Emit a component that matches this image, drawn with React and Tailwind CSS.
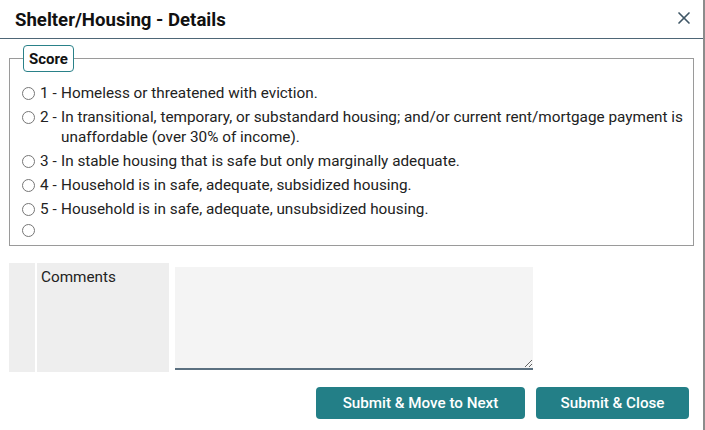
import { X } from 'lucide-react'

const options = [
  { n: '1', text: 'Homeless or threatened with eviction.' },
  {
    n: '2',
    text: 'In transitional, temporary, or substandard housing; and/or current rent/mortgage payment is unaffordable (over 30% of income).',
  },
  { n: '3', text: 'In stable housing that is safe but only marginally adequate.' },
  { n: '4', text: 'Household is in safe, adequate, subsidized housing.' },
  { n: '5', text: 'Household is in safe, adequate, unsubsidized housing.' },
]

export default function App() {
  return (
    <div
      className="h-[430px] w-[705px] overflow-hidden border-r-2 border-[#8c8c8c] bg-white text-[#222]"
      style={{ fontFamily: 'Roboto, "Liberation Sans", sans-serif' }}
    >
      {/* header */}
      <div className="flex h-[39px] items-center justify-between border-b border-[#4e6676] pl-[15px] pr-[9px]">
        <h2 className="mt-[4px] text-[18.6px] font-bold text-[#111]">Shelter/Housing - Details</h2>
        <button type="button" aria-label="Close" className="-mt-[2px] text-[#3f5666]">
          <X size={20} strokeWidth={2} />
        </button>
      </div>

      <div className="px-[9px] pt-[6px]">
        <fieldset className="border border-[#9a9a9a] pb-[7px] pl-[12px] pr-[6px]">
          <legend className="ml-[1px] h-[27px] rounded-[4px] border border-[#2a8189] px-[5px] text-[15px] leading-[26px] font-bold text-[#111]">
            Score
          </legend>
          <div className="flex flex-col gap-[4px] pt-[11px]">
            {options.map((o) => (
              <label key={o.n} className="flex items-start text-[15.3px] leading-[20px] text-[#222]">
                <input type="radio" name="score" className="mt-[4px] mr-[5px] h-[13px] w-[13px] shrink-0" />
                <span className="w-[21px] shrink-0">{o.n} -</span>
                <span>{o.text}</span>
              </label>
            ))}
            <label className="flex h-[15px] items-start">
              <input type="radio" name="score" className="mt-[1px] h-[13px] w-[13px]" />
            </label>
          </div>
        </fieldset>

        {/* comments */}
        <div className="mt-[17px] flex items-start">
          <div className="h-[109px] w-[26px] bg-[#eeeeee]" />
          <div className="ml-[2px] h-[109px] w-[132px] bg-[#eeeeee] px-[4px] pt-[4px] text-[15.3px] leading-[20px] text-[#222]">
            Comments
          </div>
          <textarea
            className="mt-[4px] ml-[6px] h-[103px] w-[358px] border-b-2 border-[#5b7080] bg-[#f4f4f4] outline-none"
            aria-label="Comments"
          />
        </div>

        {/* actions */}
        <div className="mt-[15px] flex justify-end gap-[11px] pr-[5px]">
          <button
            type="button"
            className="h-[32px] w-[209px] rounded-[4px] bg-[#237f87] text-[15.2px] font-medium text-white"
          >
            Submit &amp; Move to Next
          </button>
          <button
            type="button"
            className="h-[32px] w-[153px] rounded-[4px] bg-[#237f87] text-[15.2px] font-medium text-white"
          >
            Submit &amp; Close
          </button>
        </div>
      </div>
    </div>
  )
}
